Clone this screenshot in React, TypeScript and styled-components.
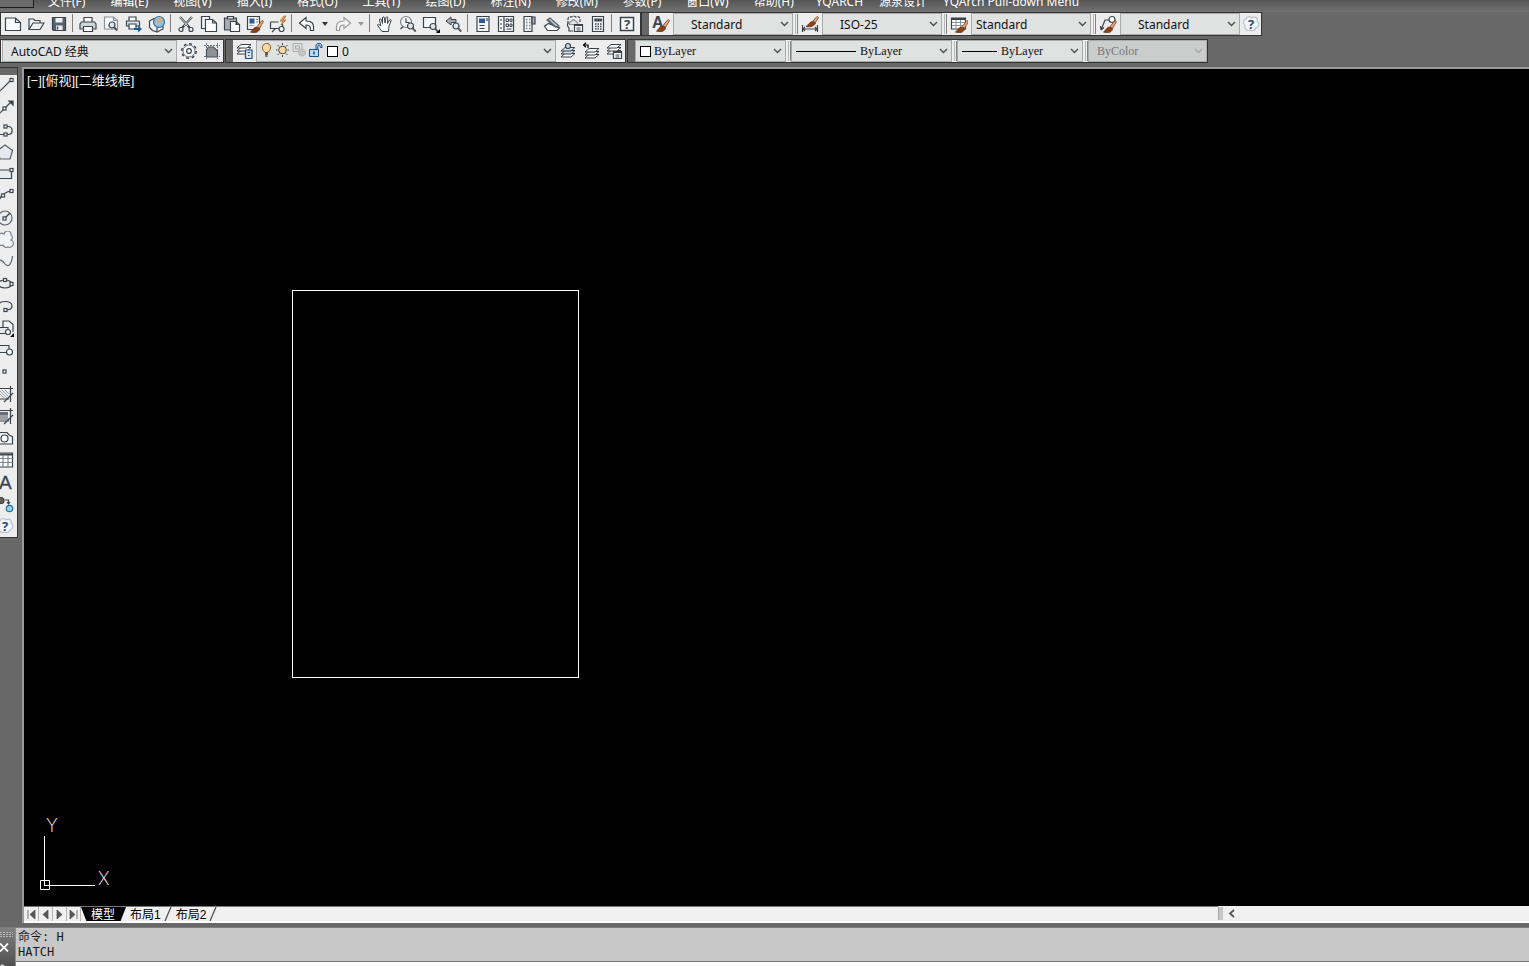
import React from "react";
import styled, { createGlobalStyle, css } from "styled-components";

const C = {
  chrome: "#686868",
  edge: "#343434",
  bar: "#ededed",
  combo: "#e0e2e1",
  comboEdge: "#a9abaa",
  ink: "#3b434c",
  text: "#111",
};

const ui = `"Noto Sans", "Noto Sans CJK SC", sans-serif`;
const song = `"Liberation Serif", "Noto Sans CJK SC", serif`;

const Global = createGlobalStyle`
  *, *::before, *::after { box-sizing: border-box; }
  html, body { margin: 0; }
  body { background: ${C.chrome}; overflow: hidden; font-family: ${ui}; font-size: 12px; color: ${C.text}; }
  button, select { font: inherit; color: inherit; margin: 0; }
`;

const Page = styled.div`
  display: flex;
  flex-direction: column;
  height: 100vh;
  background: ${C.chrome};
`;

/* ---------- menu bar ---------- */
const MenuBar = styled.nav`
  display: flex;
  align-items: flex-end;
  height: 12px;
  flex: none;
  overflow: hidden;
  background: linear-gradient(#555, #727272);
`;
const AppCorner = styled.div`
  width: 34px;
  height: 8px;
  align-self: flex-start;
  background: #6a6a6a;
  border: solid #1c1c1c;
  border-width: 0 1px 1px 0;
`;
const MenuGroup = styled.div<{ $gap: number; $start: number }>`
  display: flex;
  gap: ${(p) => p.$gap}px;
  padding-left: ${(p) => p.$start}px;
`;
const MenuItem = styled.button`
  border: 0;
  padding: 0 0 2px;
  background: none;
  color: #fff;
  line-height: 16px;
  white-space: nowrap;
`;

/* ---------- toolbars ---------- */
const ToolRow = styled.div`
  display: flex;
  flex: none;
  height: 24px;
  margin-bottom: 3px;
`;
const Toolbar = styled.div<{ $gap?: number; $pad?: string }>`
  display: flex;
  align-items: stretch;
  height: 24px;
  margin-left: ${(p) => p.$gap ?? 0}px;
  background: ${C.bar};
  border: 1px solid ${C.edge};
  padding: ${(p) => p.$pad ?? "0 0 0 1px"};
`;
const Grip = styled.div`
  width: 7px;
  margin-left: -1px;
  background: ${C.chrome};
`;
const ToolButton = styled.button<{ $w?: number }>`
  display: flex;
  align-items: center;
  justify-content: center;
  width: ${(p) => p.$w ?? 23}px;
  border: 0;
  padding: 0;
  background: none;
  flex: none;
`;
const Rule = styled.div`
  width: 1px;
  margin: 1px 3px 3px 2px;
  background: #7d7d7d;
`;
const Divider = styled.div`
  width: 5px;
  margin: 1px 0;
  border: solid #858585;
  border-width: 0 1px 0 0;
  background: linear-gradient(90deg, #ededed 0 2px, #b9b9b9 2px 3px, #ededed 3px);
`;
const ComboBox = styled.div<{ $w: number; $off?: boolean }>`
  display: flex;
  align-items: center;
  width: ${(p) => p.$w}px;
  padding-right: 2px;
  border: 1px solid ${C.comboEdge};
  background: ${(p) => (p.$off ? "#cbcdcc" : C.combo)};
  color: ${(p) => (p.$off ? "#777" : C.text)};
  flex: none;
`;
const Picker = styled.select<{ $pad: number; $song?: boolean }>`
  appearance: none;
  flex: 1;
  min-width: 0;
  height: 20px;
  border: 0;
  background: transparent;
  padding: 0 0 0 ${(p) => p.$pad}px;
  outline: none;
  opacity: 1;
  ${(p) =>
    p.$song &&
    css`
      font-family: ${song};
    `}
`;
const Swatch = styled.span`
  width: 11px;
  height: 11px;
  margin-left: 4px;
  border: 1px solid #000;
  background: #fff;
  flex: none;
`;
const LineSample = styled.span<{ $w: number }>`
  width: ${(p) => p.$w}px;
  height: 1px;
  margin-left: 4px;
  background: #000;
  flex: none;
`;

type SvgProps = { children: React.ReactNode; w?: number; h?: number };
const Glyph = ({ children, w = 18, h = 18 }: SvgProps) => (
  <svg width={w} height={h} viewBox={`0 0 ${w} ${h}`} fill="none" stroke={C.ink} strokeWidth="1.2" aria-hidden="true">
    {children}
  </svg>
);
const Chevron = ({ off }: { off?: boolean }) => (
  <svg width="11" height="8" viewBox="0 0 11 8" fill="none" stroke={off ? "#aaa" : "#4c4c4c"} strokeWidth="1.4" aria-hidden="true">
    <path d="M2 2l3.5 3.5L9 2" />
  </svg>
);

type ComboProps = {
  label: string;
  value: string;
  w: number;
  pad: number;
  off?: boolean;
  songFace?: boolean;
  children?: React.ReactNode;
};
const Combo = ({ label, value, w, pad, off, songFace, children }: ComboProps) => (
  <ComboBox $w={w} $off={off}>
    {children}
    <Picker aria-label={label} $pad={pad} $song={songFace} disabled={off}>
      <option>{value}</option>
    </Picker>
    <Chevron off={off} />
  </ComboBox>
);

const Brush = () => (
  <>
    <path d="M11 10.500l5-6 1.500 1-4 7z" fill="#e0a878" stroke="#7c4320" strokeWidth="0.8" />
    <path d="M4.500 16c2-1 2.500-4 5.500-5l3.500 1.500c0 3-3 5-9 3.500z" fill="#8a4117" stroke="#5f2c10" strokeWidth="0.8" />
  </>
);
const Lens = ({ x, y }: { x: number; y: number }) => (
  <>
    <circle cx={x} cy={y} r="3" fill="#dfe7ec" />
    <path d={`M${x + 2.2} ${y + 2.2}l3 3.4`} strokeWidth="2" stroke="#555" />
  </>
);
const HelpBubble = () => (
  <>
    <path d="M4 4c1-3 5-3 6-1 3-2 6 0 5 3 3 2 2 6-1 7-1 3-5 3-6 2-3 1-6-1-5-4-2-2-2-6 1-7z" fill="#f4f6f8" stroke="#b9c2ca" />
    <text x="6" y="14" fontSize="13" fontWeight="700" fontFamily="Noto Sans" fill="#1d4a7a" stroke="none">?</text>
  </>
);
const Stack = ({ dx = 0, dy = 0, fill = "#fff" }: { dx?: number; dy?: number; fill?: string }) => (
  <g transform={`translate(${dx} ${dy})`} strokeWidth="1">
    <path d="M5 9.500h10l-4 3.500H1z" fill="#fff" />
    <path d="M5 6.500h10l-4 3.500H1z" fill={fill} />
    <path d="M5 3.500h10l-4 3.500H1z" fill={fill} />
  </g>
);

const I = {
  newFile: <path d="M1.500 3h10l5 4.500V15.500h-15zM11.500 3v4.500h5" fill="#f8fafc" />,
  open: <path d="M2 14.500V4h4.500l1.500 1.500h5V8M2 14.500L6 8h11l-4 6.500z" fill="#eef1f4" />,
  save: (
    <>
      <path d="M2.500 2.500h13v13h-12l-1-1z" fill="#59626c" />
      <path d="M5.500 3h7v4.500h-7zM6 10.500h6.500v4.500H6z" fill="#eef1f4" stroke="none" />
      <path d="M7.500 11.500v3" strokeWidth="1.500" />
    </>
  ),
  print: (
    <>
      <path d="M5 7V2.500h8V7" fill="#fff" />
      <path d="M2.500 7h13l1.500 2v5H1V9z" fill="#cfd4d9" />
      <path d="M4.500 11.500h9v5h-9z" fill="#fff" />
    </>
  ),
  preview: (
    <>
      <path d="M2.500 2h9l4 3.500V14h-13z" fill="#f8fafc" stroke="#8a929a" />
      <path d="M11.500 2v3.500h4" stroke="#8a929a" />
      <Lens x={10} y={10} />
    </>
  ),
  publish: (
    <>
      <path d="M4 6V2h7v4" fill="#fff" />
      <path d="M1.500 6h12.500l.5 1v4H1.500z" fill="#dfe3e7" />
      <path d="M4 9h7v5H4z" fill="#fff" />
      <path d="M9 13h4v-2.500l4 3.500-4 3.500V15H9z" fill="#1f5f8f" stroke="none" />
    </>
  ),
  globe: (
    <>
      <path d="M1.500 6L6 3.500 9 8v9l-4.500-1.500-3-3z" fill="#eef1f4" />
      <path d="M9 17l6-3V9" fill="#eef1f4" />
      <circle cx="11" cy="7" r="5.500" fill="#8fc2e0" stroke="#3f6f90" />
      <path d="M11 2c2 0 4 2 3 4l-2 1-1 3-2-2 1-3z" fill="#e0a878" stroke="none" />
    </>
  ),
  cut: (
    <>
      <path d="M3 2l10 11M15 2L5 13" strokeWidth="2.200" />
      <path d="M3 2l8 9M15 2l-8 9" stroke="#fff" strokeWidth="0.8" />
      <circle cx="4" cy="14.500" r="2" fill="#fff" />
      <circle cx="14" cy="14.500" r="2" fill="#fff" />
    </>
  ),
  copy: (
    <>
      <path d="M1.500 1.500h8v12h-8z" fill="#eef1f4" />
      <path d="M5.500 4.500h7l4 3.500v8.500h-11zM12.500 4.500V8h4" fill="#fff" />
    </>
  ),
  paste: (
    <>
      <path d="M1.500 3h12v12h-12z" fill="#a8adb3" />
      <path d="M4.500 1.500h6V4h-6z" fill="#dfe3e7" />
      <path d="M7.500 6.500h5.500l3.500 3v7h-9zM13 6.500v3h3.500" fill="#fff" />
    </>
  ),
  match: (
    <>
      <path d="M1.500 1.500h12v13h-12z" fill="#f3f5f7" />
      <path d="M3.500 3.500h5v5h-5z" fill="#2d5d93" stroke="none" />
      <path d="M3.500 10.500h4M10 4.500h2M10 7h2" stroke="#8a929a" />
      <g transform="translate(0 1)">
        <Brush />
      </g>
    </>
  ),
  blockEdit: (
    <>
      <path d="M1.500 7h8M1.500 7v6.500h10M13.500 9v3" />
      <circle cx="12.500" cy="14" r="2.500" fill="#fff" />
      <path d="M3 17l3-3" />
      <path d="M15 1l-4 5h3l-2 4 5-5h-3l3-4z" fill="#e8a24c" stroke="#a8622a" strokeWidth="0.7" />
    </>
  ),
  undo: <path d="M1.500 8L8 2.500V6c6 0 8 2 7.500 9.500h-3C13 11 11 10 8 10v3.500z" fill="#fff" />,
  redo: <path d="M16.500 8L10 2.500V6c-6 0-8 2-7.500 9.500h3C5 11 7 10 10 10v3.500z" fill="#f6f6f6" stroke="#9b9b9b" />,
  hand: (
    <path
      d="M6 16.500L2 11c-1-1.500 0-2 1-1.500L5 11 3.500 5c0-1.500 1.500-1.500 2 0l1 3.500L6.500 3c0-1.500 2-1.500 2 0l.5 5 1-5.500c.2-1.300 2-1 1.800.5L11.500 8.500l2-3.500c.7-1 2-.5 1.500 1l-2 5-.5 5.500z"
      fill="#fff"
      strokeWidth="1"
    />
  ),
  zoomRt: (
    <>
      <circle cx="7" cy="7" r="5.500" fill="#f2f4f6" stroke="#7c848c" />
      <path d="M7 3.500V7.500h3.500M1.500 14l2.500-2.500" />
      <Lens x={11.500} y={11} />
    </>
  ),
  zoomWin: (
    <>
      <path d="M1.500 2.500h12v10h-12z" fill="#f3f5f7" />
      <Lens x={11} y={11.500} />
      <path d="M18 14v4h-4z" fill="#000" stroke="none" />
    </>
  ),
  zoomPrev: (
    <>
      <path d="M1 6l5-4v2.500h5v3H6V10z" fill="#a8adb3" strokeWidth="1" />
      <Lens x={11} y={11} />
    </>
  ),
  props: (
    <>
      <path d="M3 1.500h12v15H3z" fill="#f3f5f7" />
      <path d="M5 3.500h6v4.500H5z" fill="#2d5d93" stroke="none" />
      <path d="M5.500 10.500h5M5.500 13.500h5M13 3v3" />
    </>
  ),
  design: (
    <>
      <path d="M1.500 1.500h15v15h-15zM7 2v14.500" fill="#f3f5f7" />
      <path d="M9 4h2.500v2.500H9zM13 4h2v2.500h-2zM9 9h2.500v2.500H9zM13 9h2v2.500h-2zM4 4v2M4 8v2M4 12v2M9.500 14h5" strokeWidth="1" />
    </>
  ),
  palette: (
    <>
      <path d="M4 1.500h8v15H4z" fill="#f3f5f7" />
      <path d="M12 2h3v7h-3z" fill="#a8adb3" />
      <path d="M6 4.500h1.500M9 4.500h1.500M6 7.500h1.500M9 7.500h1.500M6 10.500h1.500M9 10.500h1.500M6 13.500h1.500M9 13.500h1.500" strokeWidth="1.600" stroke="#7c848c" />
    </>
  ),
  sheets: (
    <>
      <path d="M4 5l3-2 9 8-3 2z" fill="#c3c8cd" stroke="#59626c" />
      <path d="M1.500 11l4-2.500 7 3 4 1.500-2.500 2.500H4.500z" fill="#fff" />
      <path d="M4.500 4.500l8.500 8" stroke="#59626c" strokeWidth="1.600" />
    </>
  ),
  markup: (
    <>
      <path d="M2 9V4c0-3 3-2 4-2 1-1 3-1 4 0 2-1 4 0 4 2v3" strokeDasharray="3 1" />
      <path d="M2 8c-1 2 0 4 1 5v3h4" />
      <path d="M3.500 7.500l4-3 4 3v2h-8z" fill="#dfe3e7" stroke="#8a929a" />
      <path d="M8.500 9.500h8v7h-8z" fill="#fff" />
      <path d="M8.500 10.500h8M10.500 13h4M10.500 15h4" />
    </>
  ),
  calc: (
    <>
      <path d="M3.500 1.500h11v15h-11z" fill="#f3f5f7" />
      <path d="M6 4h6.500v2H6z" fill="#59626c" />
      <path d="M6 9h1.500M8.500 9H10M11 9h1.500M6 11.500h1.500M8.500 11.500H10M11 11.500h1.500M6 14h1.500M8.500 14H10M11 14h1.500" strokeWidth="1.500" />
    </>
  ),
  help: (
    <>
      <path d="M2.500 2.500h13v13h-13z" fill="#f8fafc" strokeWidth="1.500" />
      <text x="6" y="14" fontSize="13" fontWeight="700" fontFamily="Noto Sans" fill={C.ink} stroke="none">?</text>
    </>
  ),
  textStyle: (
    <>
      <text x="0" y="13" fontSize="16" fontWeight="600" fontFamily="Liberation Sans" fill={C.ink} stroke="none">A</text>
      <Brush />
    </>
  ),
  dimStyle: (
    <>
      <path d="M1.500 10v7M16.500 10v7M1.500 14h15M4 12l-2 2 2 2M14 12l2 2-2 2" />
      <path d="M12 6l4-4.500 1.500 1-3 5z" fill="#e0a878" stroke="#7c4320" strokeWidth="0.8" />
      <path d="M5 11.500c2-1 3-4 6-5l3.500 1.500c-1 3-5 4.500-9.500 3.500z" fill="#8a4117" stroke="#5f2c10" strokeWidth="0.8" />
    </>
  ),
  tableStyle: (
    <>
      <path d="M1.500 3h14v11h-14z" fill="#fff" />
      <path d="M2 4h13" strokeWidth="2" />
      <path d="M2 7.500h13M2 10.500h13M6 5v9M10.500 5v9" stroke="#8a929a" strokeWidth="1" />
      <g transform="translate(1 1)">
        <Brush />
      </g>
    </>
  ),
  leaderStyle: (
    <>
      <path d="M2 15L6 5h5M2 15l-.500-4M2 15l3-2.500" />
      <circle cx="13" cy="4.500" r="3" fill="#fff" />
      <g transform="translate(0 1)">
        <Brush />
      </g>
    </>
  ),
  bubble: <HelpBubble />,
  gear: (
    <>
      <circle cx="9" cy="9" r="7.200" strokeWidth="1.600" strokeDasharray="2.800 2.850" />
      <circle cx="9" cy="9" r="6" fill="#f6f7f8" strokeWidth="1" stroke="#6b737b" />
      <circle cx="9" cy="9" r="2.300" fill="#fff" />
    </>
  ),
  workspace: (
    <>
      <path d="M3.500 1v16M14.500 1v16M1 3.500h16M1 14.500h16" strokeDasharray="2 1" strokeWidth="1" stroke="#6a6f92" />
      <path d="M3.500 15V8l2-3h5l4 4v6z" fill="#8c9095" stroke="#4b535c" />
    </>
  ),
  layerProps: (
    <>
      <Stack dy={-1} />
      <path d="M9.500 8h6.500v8.500H9.500z" fill="#d8e6f2" stroke="#1f4f80" />
      <path d="M11.500 10.500h2.500M12 13.500h1.500" stroke="#1f4f80" />
    </>
  ),
  layerCur: (
    <>
      <Stack dx={1} dy={2} fill="#cfe0ea" />
      <circle cx="9" cy="4" r="2.500" fill="#c3d9e6" />
    </>
  ),
  layerPrev: (
    <>
      <Stack dx={2} dy={3} />
      <path d="M1 3h5v3M4 .8L1.500 3 4 5.200" stroke="#000" />
    </>
  ),
  layerStates: (
    <>
      <Stack dx={1} dy={-1} />
      <path d="M8.500 9.500h8v7h-8z" fill="#fff" />
      <path d="M8.500 10.500h8M10.500 13h4M10.500 15h4" />
    </>
  ),
};

const MiniIcon = styled.svg`
  flex: none;
  margin: 0 0 2px 1px;
`;
const LayerFlags = () => (
  <>
    <MiniIcon width="17" height="16" viewBox="0 0 17 16" stroke="#7c5a2a" fill="#fbd9a0" aria-hidden="true">
      <path d="M7 10.500C4.500 8 4 6.500 4.500 4.500c1-4 7.500-4 8 0 .5 2-.5 3.500-2.500 6z" />
      <path d="M7 12h3M7.500 14h2" stroke="#333" strokeWidth="1.500" />
    </MiniIcon>
    <MiniIcon width="15" height="16" viewBox="0 0 15 16" stroke="#4a4a4a" fill="#fbd9a0" aria-hidden="true">
      <circle cx="6.500" cy="8" r="3.800" />
      <path d="M6.500 1v2M6.500 13v2M0 8h1.500M11.500 8H13M1.500 3L3 4.500M10 11.500l1.500 1.500M11.500 3L10 4.500M3 11.500L1.500 13" />
    </MiniIcon>
    <MiniIcon width="15" height="16" viewBox="0 0 15 16" stroke="#aaa" fill="#ddd" aria-hidden="true">
      <path d="M1 1.500h9v8H1zM3.500 4h4v3h-4z" />
      <circle cx="10" cy="10.500" r="3.500" fill="#c4c4c4" strokeDasharray="1.500 1" />
    </MiniIcon>
    <MiniIcon width="15" height="16" viewBox="0 0 15 16" stroke="#1f4f80" fill="#b5dcf2" aria-hidden="true">
      <path d="M8 7V4c0-3.500 6-3.500 6 0v1.500h-1.800V4.300c0-1.600-2.400-1.600-2.400 0V7" />
      <path d="M1.500 7.500h9v7h-9z" />
      <path d="M6 9.500v3" strokeWidth="1.500" />
    </MiniIcon>
  </>
);

/* ---------- workspace ---------- */
const Workspace = styled.main`
  display: flex;
  flex: 1;
  min-height: 0;
  margin-top: 1px;
`;
const DrawDock = styled.aside`
  width: 22px;
  flex: none;
`;
const DrawBar = styled.div`
  width: 18px;
  border: solid ${C.edge};
  border-width: 1px 1px 1px 0;
  background: ${C.bar};
  &::before {
    content: "";
    display: block;
    height: 7px;
    background: ${C.chrome};
  }
`;
const DrawTool = styled.button`
  display: flex;
  align-items: center;
  justify-content: flex-end;
  width: 17px;
  height: 22px;
  padding: 0 3px 0 0;
  border: 0;
  background: none;
  overflow: hidden;
  svg {
    flex: none;
  }
`;

const dot = (x: number, y: number) => <rect x={x - 1.5} y={y - 1.5} width="3" height="3" fill="#fff" />;
const drawTools: [string, React.ReactNode][] = [
  ["Line", <><path d="M2 16L15 3" />{dot(15.5, 3)}</>],
  ["Construction line", <><path d="M1 17L15 3" />{dot(8.5, 9.5)}<path d="M13 2h4v4z" fill={C.ink} /></>],
  ["Polyline", <><path d="M1 13.500h8M9 5.500h3c5.500 0 5.500 8 0 8H9" />{dot(9.5, 5.5)}{dot(9.5, 13.5)}</>],
  ["Polygon", <path d="M9 2l7.500 5.500-2.500 8.500H4L1.500 7.500z" fill="#e6e9ed" stroke="#59626c" />],
  ["Rectangle", <><path d="M1 5h14.500v8.500H1z" fill="#e6e9ed" />{dot(15.5, 5)}</>],
  ["Arc", <><path d="M2 16C4 9 9 5 15 4" />{dot(7, 8.5)}{dot(15.5, 4)}</>],
  ["Circle", <><circle cx="9" cy="9" r="7" fill="#e9ecef" stroke="#59626c" /><path d="M9 9l5-5" />{dot(8.5, 9.5)}</>],
  ["Revision cloud", <path d="M3 6a3 3 0 0 1 5-3 3.500 3.500 0 0 1 7 1 3 3 0 0 1 0 5 3.600 3.600 0 0 1-3 7 3.500 3.500 0 0 1-5-2 3.500 3.500 0 0 1-5-4z" fill="#f1f3f5" stroke="#7c848c" />],
  ["Spline", <path d="M1 9c3-4 6-1 8 2 4 5 7-2 7.500-8" stroke="#59626c" />],
  ["Ellipse", <><ellipse cx="9" cy="9" rx="7" ry="4" fill="#e9ecef" />{dot(9, 5)}{dot(15.5, 9)}</>],
  ["Ellipse arc", <><path d="M2 9c1-6 14-6 14 0 0 3-3 4-6 4" />{dot(9.5, 13)}</>],
  ["Insert block", <><path d="M7 9V2h6l4 3.500V13" fill="#f3f5f7" /><path d="M1 8.500h11v6H1z" fill="#e6e9ed" /><circle cx="12" cy="13" r="2.500" fill="#fff" /><path d="M18 14v4h-4z" fill="#000" stroke="none" /></>],
  ["Make block", <><path d="M1 4.500h12v7H1z" fill="#e6e9ed" /><circle cx="13.500" cy="11" r="3" fill="#fff" /></>],
  ["Point", dot(8.5, 8.5)],
  ["Hatch", <><path d="M1 3.500h16M14.500 1v16M1 14h12" /><path d="M3 5l8 8M6 5l6 6M9 5l4 4M4 9l4 4" stroke="#8a929a" strokeWidth="0.8" /><path d="M8 17l9-9" /></>],
  ["Gradient", <><path d="M2 5h10v8H2z" fill="#9aa0a6" stroke="none" /><path d="M2 5h10v3H2z" fill="#686e75" stroke="none" /><path d="M1 3.500h16M14.500 1v16M1 14h12M8 17l9-9" /></>],
  ["Region", <><path d="M1 3.500h10c1 2 3 3.500 5.500 4V15H1z" fill="#f3f5f7" /><circle cx="8.500" cy="9.500" r="3.500" fill="#fff" /></>],
  ["Table", <><path d="M1 2h15.500v14H1z" fill="#fff" /><path d="M1 3.500h15.500" strokeWidth="2" /><path d="M1 7.500h15.500M1 11.500h15.500M7 4v12M12 4v12" stroke="#7c848c" /></>],
  ["Multiline text", <text x="3" y="16" fontSize="19" fontFamily="Liberation Sans" fill={C.ink} stroke={C.ink} strokeWidth="0.3">A</text>],
  ["Add selected", <><circle cx="5" cy="5.500" r="3" fill="#6e5a50" /><path d="M9 5h3.500v3M11 7l1.500 2 1.500-2" /><circle cx="13.500" cy="13.500" r="3.200" fill="#8fd0f5" stroke="#2f6d96" /></>],
  ["Help", <HelpBubble />],
];

const Viewport = styled.section`
  display: flex;
  flex-direction: column;
  flex: 1;
  min-width: 0;
  border: solid #9a9a9a;
  border-width: 2px 0 0 2px;
`;
const Canvas = styled.div`
  position: relative;
  flex: 1;
  min-height: 0;
  background: #000;
  overflow: hidden;
`;
const ViewLabel = styled.div`
  padding: 3px;
  font: 13px/18px "Liberation Sans", "Noto Sans CJK SC", sans-serif;
  color: #f2f2f2;
`;
const DrawnRect = styled.div`
  position: absolute;
  left: 268px;
  top: 221px;
  width: 287px;
  height: 388px;
  border: 1px solid #fff;
`;
const Ucs = styled.svg`
  position: absolute;
  left: 14px;
  bottom: 8px;
`;

const SheetBar = styled.div`
  display: flex;
  flex: none;
  height: 17px;
  background: #f0f0f0;
  border-bottom: 2px solid #fff;
`;
const SheetTabs = styled.div`
  display: flex;
  flex: 1;
  padding-left: 1px;
  border-top: 1px solid #777;
  font: 12px/14px "Liberation Sans", "Noto Sans CJK SC", sans-serif;
`;
const NavButton = styled.button`
  display: flex;
  align-items: center;
  justify-content: center;
  width: 14px;
  padding: 0;
  border: 0;
  border-right: 1px solid #b5b5b5;
  background: #f0f0f0;
`;
const SheetTab = styled.button<{ $on?: boolean }>`
  border: 0;
  padding: 1px 3px 0 4px;
  background: none;
  color: #000;
  ${(p) =>
    p.$on &&
    css`
      padding: 1px 11px 0 10px;
      background: #000;
      color: #fff;
      clip-path: polygon(0 0, 100% 0, 88% 100%, 12% 100%);
    `}
`;
const Slash = () => (
  <svg width="8" height="14" viewBox="0 0 8 14" fill="none" stroke="#555" aria-hidden="true">
    <path d="M7 0L1 14" strokeWidth="1.3" />
  </svg>
);
const ScrollTrack = styled.div`
  display: flex;
  align-items: center;
  width: 311px;
`;
const Splitter = styled.div`
  width: 5px;
  height: 13px;
  background: #c6c8c7;
  border-left: 1px solid #aaa;
`;
const ScrollButton = styled.button`
  display: flex;
  justify-content: center;
  width: 18px;
  padding: 0;
  border: 0;
  background: none;
`;

/* ---------- command window ---------- */
const CommandPanel = styled.footer`
  display: flex;
  flex: none;
  height: 39px;
  margin-top: 4px;
  border-top: 1px solid #7d7d7d;
`;
const CommandGrip = styled.div`
  display: flex;
  flex-direction: column;
  justify-content: space-between;
  width: 16px;
  padding-top: 4px;
  background: linear-gradient(#808080, #505050);
  border-right: 1px solid #8d8d8d;
  overflow: hidden;
`;
const CloseButton = styled.button`
  display: flex;
  height: 16px;
  padding: 0;
  border: 0;
  background: none;
`;
const CommandBody = styled.div`
  flex: 1;
  display: flex;
  flex-direction: column;
`;
const CommandLog = styled.div`
  flex: 1;
  padding: 2px 2px 0;
  background: #c8c8c8;
  font: 12px/15px "DejaVu Sans Mono", "Noto Sans CJK SC", monospace;
  color: #1a1a1a;
`;
const CommandInput = styled.input`
  height: 5px;
  border: 0;
  border-top: 1px solid #777;
  padding: 0;
  background: #fff;
  outline: none;
`;

const menus = ["文件(F)", "编辑(E)", "视图(V)", "插入(I)", "格式(O)", "工具(T)", "绘图(D)", "标注(N)", "修改(M)", "参数(P)", "窗口(W)", "帮助(H)"];
const addOns = ["YQARCH", "源泉设计", "YQArch Pull-down Menu"];

const Tool = ({ name, w, children }: { name: string; w?: number; children: React.ReactNode }) => (
  <ToolButton aria-label={name} $w={w}>
    <Glyph>{children}</Glyph>
  </ToolButton>
);
const Tools = ({ items }: { items: [string, React.ReactNode][] }) => (
  <>
    {items.map(([name, icon]) => (
      <Tool key={name} name={name}>{icon}</Tool>
    ))}
  </>
);
const DropArrow = ({ name, off }: { name: string; off?: boolean }) => (
  <ToolButton aria-label={name} $w={13}>
    <svg width="6" height="4" viewBox="0 0 6 4" fill={off ? "#999" : "#333"} aria-hidden="true">
      <path d="M0 0h6L3 4z" />
    </svg>
  </ToolButton>
);

const StandardBar = () => (
  <Toolbar $pad="0 2px 0 0">
    <Tools items={[["New", I.newFile], ["Open", I.open], ["Save", I.save]]} />
    <Rule />
    <Tools items={[["Plot", I.print], ["Plot preview", I.preview], ["Publish", I.publish], ["3D print", I.globe]]} />
    <Rule />
    <Tools items={[["Cut", I.cut], ["Copy", I.copy], ["Paste", I.paste], ["Match properties", I.match], ["Block editor", I.blockEdit]]} />
    <Rule />
    <Tool name="Undo">{I.undo}</Tool>
    <DropArrow name="Undo list" />
    <Tool name="Redo">{I.redo}</Tool>
    <DropArrow name="Redo list" off />
    <Rule />
    <Tools items={[["Pan", I.hand], ["Zoom realtime", I.zoomRt], ["Zoom window", I.zoomWin], ["Zoom previous", I.zoomPrev]]} />
    <Rule />
    <Tools
      items={[
        ["Properties", I.props],
        ["Design center", I.design],
        ["Tool palettes", I.palette],
        ["Sheet set manager", I.sheets],
        ["Markup set manager", I.markup],
        ["Calculator", I.calc],
      ]}
    />
    <Rule />
    <Tool name="Help">{I.help}</Tool>
  </Toolbar>
);

const StylesBar = () => (
  <Toolbar>
    <Grip />
    <Tool name="Text style" w={24}>{I.textStyle}</Tool>
    <Combo label="Text style" value="Standard" w={120} pad={17} />
    <Divider />
    <Tool name="Dimension style" w={24}>{I.dimStyle}</Tool>
    <Combo label="Dimension style" value="ISO-25" w={120} pad={17} />
    <Divider />
    <Tool name="Table style" w={24}>{I.tableStyle}</Tool>
    <Combo label="Table style" value="Standard" w={120} pad={4} />
    <Divider />
    <Tool name="Multileader style" w={24}>{I.leaderStyle}</Tool>
    <Combo label="Multileader style" value="Standard" w={120} pad={17} />
    <Tool name="Style help" w={21}>{I.bubble}</Tool>
  </Toolbar>
);

const LayersBar = () => (
  <Toolbar $gap={1}>
    <Grip />
    <Tool name="Layer properties">{I.layerProps}</Tool>
    <Combo label="Layer" value="0" w={300} pad={4}>
      <LayerFlags />
      <Swatch />
    </Combo>
    <Tools items={[["Make current", I.layerCur], ["Layer previous", I.layerPrev], ["Layer states", I.layerStates]]} />
  </Toolbar>
);

const PropertiesBar = () => (
  <Toolbar $gap={1}>
    <Grip />
    <Combo label="Color" value="ByLayer" w={151} pad={3} songFace>
      <Swatch />
    </Combo>
    <Divider />
    <Combo label="Linetype" value="ByLayer" w={161} pad={4} songFace>
      <LineSample $w={60} />
    </Combo>
    <Divider />
    <Combo label="Lineweight" value="ByLayer" w={126} pad={4} songFace>
      <LineSample $w={35} />
    </Combo>
    <Divider />
    <Combo label="Plot style" value="ByColor" w={119} pad={8} songFace off />
  </Toolbar>
);

const navShapes = ["M2 0v9M9 0v9L4 4.500z", "M8 0v9L3 4.500z", "M3 0v9l5-4.500z", "M2 0v9l5-4.500zM9 0v9"];
const navNames = ["First tab", "Previous tab", "Next tab", "Last tab"];

export default function App() {
  return (
    <Page>
      <Global />
      <MenuBar>
        <AppCorner />
        <MenuGroup $gap={25} $start={14}>
          {menus.map((m) => <MenuItem key={m}>{m}</MenuItem>)}
        </MenuGroup>
        <MenuGroup $gap={16} $start={22}>
          {addOns.map((m) => <MenuItem key={m}>{m}</MenuItem>)}
        </MenuGroup>
      </MenuBar>
      <ToolRow>
        <StandardBar />
        <StylesBar />
      </ToolRow>
      <ToolRow>
        <Toolbar>
          <Combo label="Workspace" value="AutoCAD 经典" w={175} pad={8} />
          <Tools items={[["Workspace settings", I.gear], ["My workspace", I.workspace]]} />
        </Toolbar>
        <LayersBar />
        <PropertiesBar />
      </ToolRow>
      <Workspace>
        <DrawDock>
          <DrawBar>
            {drawTools.map(([name, icon]) => (
              <DrawTool key={name} aria-label={name}>
                <Glyph>{icon}</Glyph>
              </DrawTool>
            ))}
          </DrawBar>
        </DrawDock>
        <Viewport>
          <Canvas>
            <ViewLabel>[−][俯视][二维线框]</ViewLabel>
            <DrawnRect />
            <Ucs width="80" height="80" viewBox="0 0 80 80" fill="none" stroke="#fff" aria-hidden="true">
              <path d="M6.500 18v49M6 67.500h51M2.500 62.500h9v9h-9z" />
              <text x="8" y="14" fontSize="18" fontFamily="Inter" fontWeight="200" fill="#fff" stroke="none">Y</text>
              <text x="60" y="67" fontSize="18" fontFamily="Inter" fontWeight="200" fill="#fff" stroke="none">X</text>
            </Ucs>
          </Canvas>
          <SheetBar>
            <SheetTabs>
              {navShapes.map((d, i) => (
                <NavButton key={d} aria-label={navNames[i]}>
                  <svg width="11" height="9" viewBox="0 0 11 9" fill="#555" stroke="#555" strokeWidth="0.8" aria-hidden="true">
                    <path d={d} />
                  </svg>
                </NavButton>
              ))}
              <SheetTab $on>模型</SheetTab>
              <SheetTab>布局1</SheetTab>
              <Slash />
              <SheetTab>布局2</SheetTab>
              <Slash />
            </SheetTabs>
            <ScrollTrack>
              <Splitter />
              <ScrollButton aria-label="Scroll left">
                <svg width="8" height="9" viewBox="0 0 8 9" fill="none" stroke="#555" strokeWidth="1.8" aria-hidden="true">
                  <path d="M6 1L2 4.500 6 8" />
                </svg>
              </ScrollButton>
            </ScrollTrack>
          </SheetBar>
        </Viewport>
      </Workspace>
      <CommandPanel>
        <CommandGrip>
          <svg width="14" height="6" viewBox="0 0 14 6" stroke="#b5b5b5" strokeDasharray="2 1" aria-hidden="true">
            <path d="M0 .5h13M0 2.500h13M0 4.500h13" />
          </svg>
          <CloseButton aria-label="Close">
            <svg width="9" height="9" viewBox="0 0 9 9" stroke="#fff" strokeWidth="1.8" aria-hidden="true">
              <path d="M0 .5l8 8M8 .5l-8 8" />
            </svg>
          </CloseButton>
          <svg width="5" height="3" viewBox="0 0 5 3" fill="#ddd" aria-hidden="true">
            <path d="M0 3l2-2 3 2z" />
          </svg>
        </CommandGrip>
        <CommandBody>
          <CommandLog>
            <div>命令: H</div>
            <div>HATCH</div>
          </CommandLog>
          <CommandInput aria-label="Command" />
        </CommandBody>
      </CommandPanel>
    </Page>
  );
}
